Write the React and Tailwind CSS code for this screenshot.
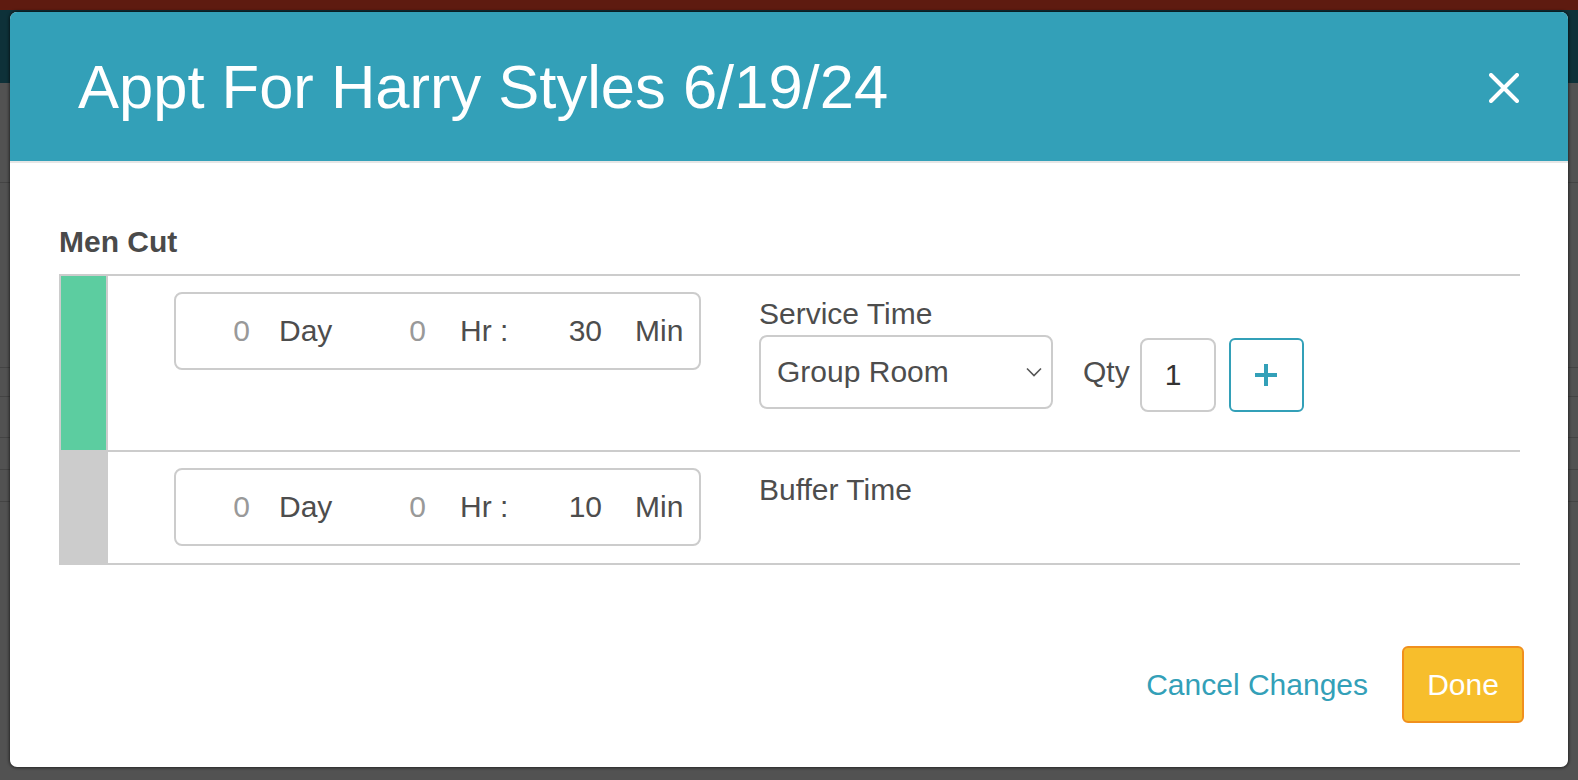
import React from "react";

function TimeBox({ day, hr, min }) {
  return (
    <div className="flex h-[78px] w-[527px] items-center rounded-[8px] border-2 border-[#cccccc] bg-white text-[30px] leading-[34px]">
      <div className="w-[74px] text-right text-[#999999]">{day}</div>
      <div className="ml-[29px] w-[53px] text-[#4d4d4d]">Day</div>
      <div className="w-[94px] text-right text-[#999999]">{hr}</div>
      <div className="ml-[34px] w-[48px] whitespace-pre text-[#4d4d4d]">Hr :</div>
      <div className="w-[94px] text-right text-[#4d4d4d]">{min}</div>
      <div className="ml-[33px] text-[#4d4d4d]">Min</div>
    </div>
  );
}

export default function App() {
  return (
    <div
      className="relative h-[780px] w-[1578px] overflow-hidden bg-[#525252]"
      style={{ fontFamily: '"Liberation Sans", Arial, Helvetica, sans-serif' }}
    >
      {/* dimmed page behind */}
      <div className="flex h-full flex-col">
        <div className="h-[10px] bg-[#5e1b10]" />
        <div className="h-[73px] bg-[#0e3139]" />
        <div className="h-[100px] border-b border-[#444444]" />
        <div className="h-[185px] border-b border-[#444444]" />
        <div className="h-[29px] border-b border-[#444444]" />
        <div className="h-[41px] border-b border-[#444444]" />
        <div className="h-[32px] border-b border-[#444444]" />
        <div className="h-[32px] border-b border-[#444444]" />
        <div className="flex-1" />
      </div>

      {/* modal */}
      <div className="absolute left-[10px] top-[12px] flex h-[755px] w-[1558px] flex-col overflow-hidden rounded-[7px] bg-white shadow-[0_0_3px_1px_rgba(0,0,0,0.55)]">
        <div className="flex h-[151px] shrink-0 items-center justify-between border-b-2 border-[#e6e6e6] bg-[#33a0b8] pl-[68px] pr-[49px]">
          <h1 className="text-[61.5px] font-normal leading-[62px] text-white">
            Appt For Harry Styles 6/19/24
          </h1>
          <svg width="30" height="30" viewBox="0 0 30 30" className="mt-[2px]">
            <path d="M2 2 L28 28 M28 2 L2 28" stroke="#ffffff" strokeWidth="4" strokeLinecap="round" />
          </svg>
        </div>

        <div className="flex flex-1 flex-col pl-[49px] pr-[48px]">
          <div className="mt-[61px] text-[30px] font-bold leading-[36px] text-[#4a4a4a]">Men Cut</div>

          <div className="mt-[14px] border-l-2 border-t-2 border-[#cccccc]">
            {/* row 1 */}
            <div className="flex h-[176px] border-b-2 border-[#cccccc]">
              <div className="w-[47px] shrink-0 border-r-2 border-[#cccccc] bg-[#5ccda0]" />
              <div className="flex flex-1 items-start pl-[66px] pt-[16px]">
                <TimeBox day="0" hr="0" min="30" />
                <div className="ml-[58px] mt-[5px] flex flex-col">
                  <div className="text-[30px] leading-[34px] text-[#4d4d4d]">Service Time</div>
                  <div className="mt-[1px] flex items-center">
                    <div className="flex h-[74px] w-[294px] items-center justify-between rounded-[8px] border-2 border-[#cccccc] bg-white pl-[16px] pr-[9px]">
                      <span className="text-[30px] leading-[34px] text-[#4d4d4d]">Group Room</span>
                      <svg width="16" height="10" viewBox="0 0 16 10">
                        <path d="M1 1.5 L8 8.5 L15 1.5" fill="none" stroke="#555555" strokeWidth="1.6" />
                      </svg>
                    </div>
                    <span className="ml-[30px] text-[30px] leading-[34px] text-[#4d4d4d]">Qty</span>
                    <div className="ml-[10px] mt-[6px] flex h-[74px] w-[76px] items-center rounded-[8px] border-2 border-[#cccccc] pl-[23px] text-[30px] leading-[34px] text-[#333333]">
                      1
                    </div>
                    <div className="ml-[13px] mt-[6px] flex h-[74px] w-[75px] items-center justify-center rounded-[6px] border-2 border-[#33a0b8]">
                      <svg width="22" height="22" viewBox="0 0 22 22">
                        <path d="M11 0 V22 M0 11 H22" stroke="#33a0b8" strokeWidth="4" />
                      </svg>
                    </div>
                  </div>
                </div>
              </div>
            </div>
            {/* row 2 */}
            <div className="flex h-[113px] border-b-2 border-[#cccccc]">
              <div className="w-[47px] shrink-0 bg-[#cccccc]" />
              <div className="flex flex-1 items-start pl-[66px] pt-[16px]">
                <TimeBox day="0" hr="0" min="10" />
                <div className="ml-[58px] mt-[5px] text-[30px] leading-[34px] text-[#4d4d4d]">Buffer Time</div>
              </div>
            </div>
          </div>

          <div className="mt-[81px] flex items-center justify-end pr-0">
            <span className="text-[30px] leading-[34px] text-[#33a0b8]">Cancel Changes</span>
            <div className="ml-[34px] mr-[-4px] flex h-[77px] w-[122px] items-center justify-center rounded-[6px] border-2 border-[#f0901e] bg-[#f7be2c] text-[30px] leading-[34px] text-white">
              Done
            </div>
          </div>
        </div>
      </div>
    </div>
  );
}
